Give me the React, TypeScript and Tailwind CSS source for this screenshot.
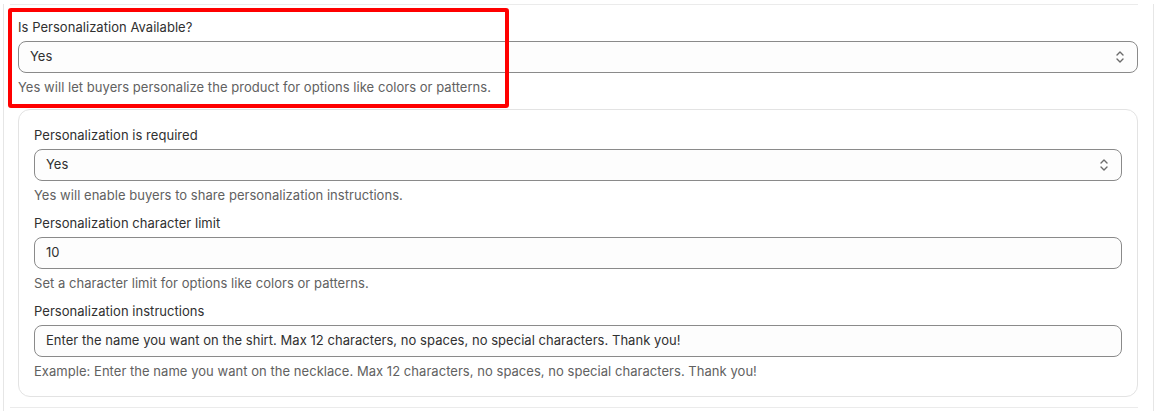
import React from "react";

function SelectIcon() {
  return (
    <svg width="10" height="14" viewBox="0 0 10 14" fill="none" stroke="#6b6b6b" strokeWidth="1.4" strokeLinecap="round" strokeLinejoin="round">
      <path d="M2 5 L5 2 L8 5" />
      <path d="M2 9 L5 12 L8 9" />
    </svg>
  );
}

function Field({
  label,
  value,
  help,
  select,
}: {
  label: string;
  value: string;
  help: string;
  select?: boolean;
}) {
  return (
    <div className="flex flex-col tracking-[0.04px]">
      <div className="h-5 leading-5 text-[13px] text-[#303030]">{label}</div>
      <div className="mt-1 h-8 rounded-lg border border-[#8a8a8a] bg-[#fdfdfd] flex items-center pl-[11px] pr-[12px] text-[13px] text-[#303030]">
        <span className="flex-1">{value}</span>
        {select && <SelectIcon />}
      </div>
      <div className="mt-1 h-5 leading-5 text-[13px] text-[#616161]">{help}</div>
    </div>
  );
}

export default function App() {
  return (
    <div
      className="relative w-[1156px] h-[411px] bg-white overflow-hidden"
      style={{ fontFamily: "Inter, 'Noto Sans', sans-serif" }}
    >
      <div className="ml-[3px] mr-[2px] h-full border-l border-r border-[#e6e6e6] pl-[6px] pr-[15px]">
        <div className="mt-[4px] h-px bg-[#ebebeb]" />
        <div className="pl-[8px] pt-[12px]">
          <Field
            label="Is Personalization Available?"
            value="Yes"
            help="Yes will let buyers personalize the product for options like colors or patterns."
            select
          />
          <div className="mt-[12px] rounded-xl border border-[#e3e3e3] px-[15px] pt-[15px] pb-[15px] flex flex-col gap-2">
            <Field
              label="Personalization is required"
              value="Yes"
              help="Yes will enable buyers to share personalization instructions."
              select
            />
            <Field
              label="Personalization character limit"
              value="10"
              help="Set a character limit for options like colors or patterns."
            />
            <Field
              label="Personalization instructions"
              value="Enter the name you want on the shirt. Max 12 characters, no spaces, no special characters. Thank you!"
              help="Example: Enter the name you want on the necklace. Max 12 characters, no spaces, no special characters. Thank you!"
            />
          </div>
        </div>
        <div className="mt-[10px] h-px bg-[#ebebeb]" />
      </div>
      <div className="absolute left-[8px] top-[8px] w-[501px] h-[100px] border-4 border-[#ff0000] rounded-[3px]" />
    </div>
  );
}
